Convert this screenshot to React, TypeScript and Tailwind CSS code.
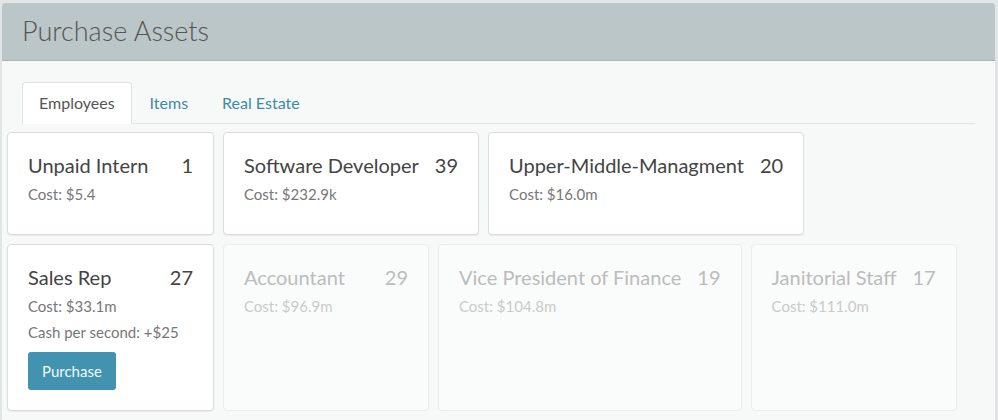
import { useState } from 'react'

type Asset = { name: string; count: number; cost: string; cps?: string; enabled: boolean }

const rows: Asset[][] = [
  [
    { name: 'Unpaid Intern', count: 1, cost: '$5.4', enabled: true },
    { name: 'Software Developer', count: 39, cost: '$232.9k', enabled: true },
    { name: 'Upper-Middle-Managment', count: 20, cost: '$16.0m', enabled: true },
  ],
  [
    { name: 'Sales Rep', count: 27, cost: '$33.1m', cps: '+$25', enabled: true },
    { name: 'Accountant', count: 29, cost: '$96.9m', enabled: false },
    { name: 'Vice President of Finance', count: 19, cost: '$104.8m', enabled: false },
    { name: 'Janitorial Staff', count: 17, cost: '$111.0m', enabled: false },
  ],
  [
    { name: 'Consultant', count: 12, cost: '$150.2m', enabled: false },
    { name: 'Lawyer', count: 9, cost: '$212.5m', enabled: false },
    { name: 'Regional Director', count: 6, cost: '$340.1m', enabled: false },
    { name: 'Chief Operating Officer', count: 3, cost: '$512.0m', enabled: false },
  ],
]

function AssetCard({ a, selected, onSelect }: { a: Asset; selected: boolean; onSelect: () => void }) {
  return (
    <div
      onClick={onSelect}
      className={
        a.enabled
          ? 'min-w-[207px] rounded-[4px] border border-[#dcdcdc] bg-white p-5 shadow-[0_1px_1px_rgba(0,0,0,0.06)]'
          : 'min-w-[206px] rounded-[4px] border border-[#ececec] bg-[#fafbfb] p-5'
      }
    >
      <div className="mb-[10px]">
        <div
          className={`flex justify-between text-[20px] leading-[25px] ${a.enabled ? 'text-[#444]' : 'text-[#bcbcbc]'}`}
        >
          <span>{a.name}</span>
          <span className="ml-4">{a.count}</span>
        </div>
        <div className={`mt-[6px] text-[15px] leading-[20px] ${a.enabled ? 'text-[#777]' : 'text-[#cacaca]'}`}>
          Cost: {a.cost}
        </div>
        {selected && a.cps && (
          <div className="mt-[6px] text-[15px] leading-[20px] text-[#777]">Cash per second: {a.cps}</div>
        )}
      </div>
      {selected && (
        <button className="h-[38px] rounded-[3px] bg-[#4193b0] px-[14px] text-[15px] text-[#f2f9fc]">
          Purchase
        </button>
      )}
    </div>
  )
}

export default function App() {
  const [tab, setTab] = useState('Employees')
  const [selected, setSelected] = useState('Sales Rep')

  return (
    <div className="min-h-screen bg-[#e2e5e6] pl-[2px] pr-[3px] pt-[3px] font-['Lato',sans-serif]">
      <div className="overflow-hidden rounded-t-[3px] bg-[#f7f9f9]">
        {/* header */}
        <div className="flex h-[58px] items-center border-b border-[#a9b5b6] bg-[#bac6c7] px-5">
          <h1 className="text-[27px] font-light text-[#555]">Purchase Assets</h1>
        </div>

        <div className="px-5 pt-[21px]">
          {/* tabs */}
          <div className="flex border-b border-[#e3e5e5]">
            {['Employees', 'Items', 'Real Estate'].map(t => (
              <button
                key={t}
                onClick={() => setTab(t)}
                className={
                  t === tab
                    ? '-mb-px mr-[2px] rounded-t-[4px] border border-[#e0e2e2] border-b-white bg-white px-4 py-[10px] text-[16px] leading-[20px] text-[#555]'
                    : '-mb-px mr-[2px] border border-transparent px-[15px] py-[10px] text-[16px] leading-[20px] text-[#3d8aa5]'
                }
              >
                {t}
              </button>
            ))}
          </div>

          {/* cards */}
          <div className="-mx-[15px] flex flex-col gap-[9px] pt-2">
            {rows.map((row, i) => (
              <div key={i} className="flex items-stretch gap-[9px]">
                {row.map(a => (
                  <AssetCard
                    key={a.name}
                    a={a}
                    selected={selected === a.name}
                    onSelect={() => a.enabled && setSelected(a.name)}
                  />
                ))}
              </div>
            ))}
          </div>
        </div>
      </div>
    </div>
  )
}
